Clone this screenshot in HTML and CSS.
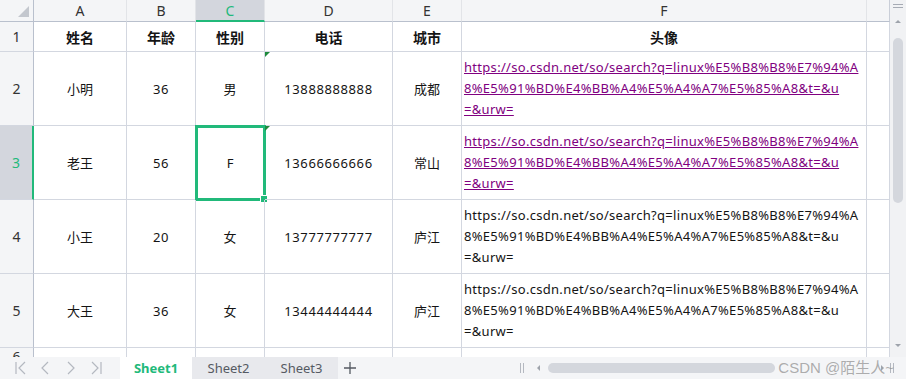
FILE: index.html
```html
<!DOCTYPE html>
<html lang="zh-CN">
<head>
    <meta charset="UTF-8">
    <title>Sheet1</title>
    <link rel="stylesheet" href="styles.css">
</head>
<body>
    <div class="app">
        <div class="sheet-area">
            <div class="grid">
                <!-- column headers -->
                <div class="cell corner"><span class="corner-tri"></span></div>
                <div class="cell col-head">A</div>
                <div class="cell col-head">B</div>
                <div class="cell col-head active">C</div>
                <div class="cell col-head">D</div>
                <div class="cell col-head">E</div>
                <div class="cell col-head">F</div>
                <div class="cell col-head blank"></div>

                <!-- row 1 -->
                <div class="cell row-head">1</div>
                <div class="cell title">姓名</div>
                <div class="cell title">年龄</div>
                <div class="cell title">性别</div>
                <div class="cell title">电话</div>
                <div class="cell title">城市</div>
                <div class="cell title">头像</div>
                <div class="cell"></div>

                <!-- row 2 -->
                <div class="cell row-head">2</div>
                <div class="cell">小明</div>
                <div class="cell num">36</div>
                <div class="cell">男</div>
                <div class="cell num flagged">13888888888</div>
                <div class="cell">成都</div>
                <div class="cell url"><a href="#">https://so.csdn.net/so/search?q=linux%E5%B8%B8%E7%94%A<br>8%E5%91%BD%E4%BB%A4%E5%A4%A7%E5%85%A8&amp;t=&amp;u<br>=&amp;urw=</a></div>
                <div class="cell"></div>

                <!-- row 3 -->
                <div class="cell row-head active">3</div>
                <div class="cell">老王</div>
                <div class="cell num">56</div>
                <div class="cell selected">F<span class="sel-box"></span></div>
                <div class="cell num flagged">13666666666</div>
                <div class="cell">常山</div>
                <div class="cell url"><a href="#">https://so.csdn.net/so/search?q=linux%E5%B8%B8%E7%94%A<br>8%E5%91%BD%E4%BB%A4%E5%A4%A7%E5%85%A8&amp;t=&amp;u<br>=&amp;urw=</a></div>
                <div class="cell"></div>

                <!-- row 4 -->
                <div class="cell row-head">4</div>
                <div class="cell">小王</div>
                <div class="cell num">20</div>
                <div class="cell">女</div>
                <div class="cell num">13777777777</div>
                <div class="cell">庐江</div>
                <div class="cell url">https://so.csdn.net/so/search?q=linux%E5%B8%B8%E7%94%A<br>8%E5%91%BD%E4%BB%A4%E5%A4%A7%E5%85%A8&amp;t=&amp;u<br>=&amp;urw=</div>
                <div class="cell"></div>

                <!-- row 5 -->
                <div class="cell row-head">5</div>
                <div class="cell">大王</div>
                <div class="cell num">36</div>
                <div class="cell">女</div>
                <div class="cell num">13444444444</div>
                <div class="cell">庐江</div>
                <div class="cell url">https://so.csdn.net/so/search?q=linux%E5%B8%B8%E7%94%A<br>8%E5%91%BD%E4%BB%A4%E5%A4%A7%E5%85%A8&amp;t=&amp;u<br>=&amp;urw=</div>
                <div class="cell"></div>

                <!-- row 6 (cut off) -->
                <div class="cell row-head top">6</div>
                <div class="cell"></div>
                <div class="cell"></div>
                <div class="cell"></div>
                <div class="cell"></div>
                <div class="cell"></div>
                <div class="cell"></div>
                <div class="cell"></div>
            </div>

            <div class="vscroll">
                <div class="vs-menu"></div>
                <div class="vs-up"></div>
                <div class="vs-track"><div class="vs-thumb"></div></div>
                <div class="vs-down"></div>
            </div>
        </div>

        <div class="tabbar">
            <div class="tab-nav">
                <svg width="120" height="22" viewBox="0 0 120 22" fill="none" stroke="#b4b8c0" stroke-width="1.2">
                    <path d="M16 5v12M25 5l-6 6 6 6"/>
                    <path d="M48 5l-6 6 6 6"/>
                    <path d="M68 5l6 6-6 6"/>
                    <path d="M92 5l6 6-6 6M101 5v12"/>
                </svg>
            </div>
            <div class="tab current">Sheet1</div>
            <div class="tab">Sheet2</div>
            <div class="tab">Sheet3</div>
            <div class="tab-add">
                <svg width="14" height="14" viewBox="0 0 14 14" stroke="#555a63" stroke-width="1.3">
                    <path d="M7 1v12M1 7h12"/>
                </svg>
            </div>
            <div class="tab-space"></div>
            <div class="hscroll">
                <span class="hs-grip"></span>
                <span class="hs-left"></span>
                <div class="hs-track"><div class="hs-thumb"></div></div>
                <span class="hs-right"></span>
                <span class="hs-grip"></span>
            </div>
            <div class="watermark">CSDN @陌生人~</div>
        </div>
    </div>
</body>
</html>
```

FILE: styles.css
```css
* {
    box-sizing: border-box;
}

body {
    margin: 0;
    width: 906px;
    height: 379px;
    overflow: hidden;
    background: #ffffff;
    font-family: "Noto Sans", "Noto Sans CJK SC", sans-serif;
    color: #141414;
}

.app {
    display: flex;
    flex-direction: column;
    height: 379px;
}

.sheet-area {
    display: flex;
    height: 357px;
}

/* ---------- grid ---------- */
.grid {
    display: grid;
    grid-template-columns: 34px 93px 69px 69px 128px 69px 405px 23px;
    grid-template-rows: 22px 30px 74px 74px 74px 74px 30px;
    height: 357px;
    overflow: hidden;
}

.cell {
    position: relative;
    display: flex;
    align-items: center;
    justify-content: center;
    border-right: 1px solid #d3d7e0;
    border-bottom: 1px solid #d3d7e0;
    font-size: 13px;
    white-space: nowrap;
}

.num {
    letter-spacing: 0.6px;
}

.col-head {
    background: #f4f5f7;
    border-right-color: #e2e4e8;
    border-bottom-color: #b9c0cd;
    font-size: 14px;
    color: #333;
}

.col-head.blank {
    border-right-color: #c9ced8;
}

.corner {
    background: #f4f5f7;
    border-right-color: #b9c0cd;
    border-bottom-color: #b9c0cd;
}

.corner-tri {
    position: absolute;
    right: 4px;
    bottom: 4px;
    width: 0;
    height: 0;
    border-left: 11px solid transparent;
    border-bottom: 11px solid #c3c7ce;
}

.row-head {
    background: #f4f5f7;
    border-right-color: #b9c0cd;
    border-bottom-color: #d3d7e0;
    font-size: 14px;
    color: #333;
}

.row-head.top {
    align-items: flex-start;
    line-height: 18px;
}

.col-head.active {
    background: #d3d6dd;
    color: #21b97a;
    border-bottom: 2px solid #21b97a;
}

.row-head.active {
    background: #d3d6dd;
    color: #21b97a;
    border-right: 2px solid #21b97a;
}

.title {
    font-weight: bold;
    font-size: 14px;
}

.url {
    justify-content: flex-start;
    padding-left: 2px;
    line-height: 21px;
    font-size: 13px;
    letter-spacing: 0.3px;
}

.url a {
    color: #800080;
    text-decoration: underline;
}

/* number-stored-as-text marker */
.flagged::before {
    content: "";
    position: absolute;
    top: 0;
    left: 0;
    border-top: 5px solid #1e8a3c;
    border-right: 5px solid transparent;
}

.sel-box {
    position: absolute;
    top: -1px;
    left: -1px;
    right: -2px;
    bottom: -2px;
    border: 3px solid #21b97a;
}

.sel-box::after {
    content: "";
    position: absolute;
    right: -5px;
    bottom: -5px;
    width: 6px;
    height: 6px;
    background: #21b97a;
    border: 1px solid #ffffff;
}

/* ---------- vertical scrollbar ---------- */
.vscroll {
    width: 16px;
    flex: none;
    display: flex;
    flex-direction: column;
    align-items: center;
    background: #f1f2f4;
}

.vs-menu {
    width: 10px;
    height: 4px;
    margin-top: 4px;
    border-top: 1px solid #a6abb4;
    border-bottom: 1px solid #a6abb4;
}

.vs-up {
    margin-top: 12px;
    border-left: 3px solid transparent;
    border-right: 3px solid transparent;
    border-bottom: 3px solid #9ea3ab;
}

.vs-track {
    flex: 1;
    width: 100%;
    padding: 15px 3px 0;
}

.vs-thumb {
    height: 165px;
    border-radius: 5px;
    background: #d4d7dd;
}

.vs-down {
    margin-bottom: 10px;
    border-left: 3px solid transparent;
    border-right: 3px solid transparent;
    border-top: 3px solid #9ea3ab;
}

/* ---------- sheet tabs ---------- */
.tabbar {
    position: relative;
    display: flex;
    height: 22px;
    background: #f4f5f7;
    font-size: 13px;
}

.tab-nav {
    width: 120px;
    flex: none;
}

.tab-nav svg {
    display: block;
}

.tab {
    display: flex;
    align-items: center;
    justify-content: center;
    width: 73px;
    background: #e8e9ed;
    color: #555a63;
}

.tab.current {
    width: 72px;
    background: #ffffff;
    color: #21b97a;
    font-weight: bold;
}

.tab-add {
    width: 24px;
    display: flex;
    align-items: center;
    justify-content: center;
}

.tab-add svg {
    display: block;
}

.tab-space {
    flex: 1;
}

.hscroll {
    display: flex;
    align-items: center;
    width: 386px;
    flex: none;
    padding-right: 12px;
}

.hs-grip {
    width: 4px;
    height: 10px;
    border-left: 1px solid #b4b8c0;
    border-right: 1px solid #b4b8c0;
}

.hs-left {
    margin-left: 13px;
    border-top: 3px solid transparent;
    border-bottom: 3px solid transparent;
    border-right: 3px solid #9ea3ab;
}

.hs-track {
    flex: 1;
    padding: 0 8px;
}

.hs-thumb {
    width: 227px;
    height: 10px;
    border-radius: 5px;
    background: #d4d7dd;
}

.hs-right {
    margin-right: 6px;
    border-top: 3px solid transparent;
    border-bottom: 3px solid transparent;
    border-left: 3px solid #9ea3ab;
}

.watermark {
    position: absolute;
    right: 12px;
    top: 0;
    line-height: 22px;
    font-family: "Liberation Sans", "Noto Sans CJK SC", sans-serif;
    font-size: 15px;
    color: rgba(140, 140, 140, 0.7);
}
```
